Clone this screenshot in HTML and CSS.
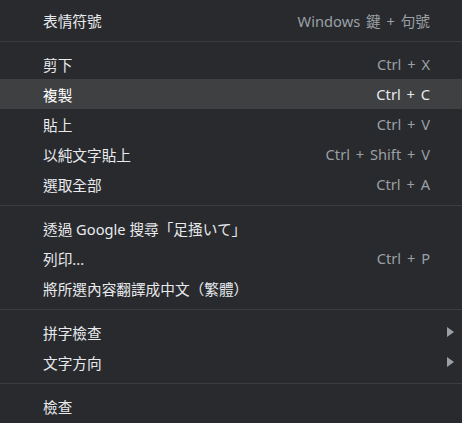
FILE: index.html
```html
<!DOCTYPE html>
<html lang="zh-Hant">
<head>
<meta charset="utf-8">
<link rel="stylesheet" href="styles.css">
</head>
<body>
<div class="menu">
  <div class="item"><span class="label">表情符號</span><span class="key">Windows 鍵 + 句號</span></div>
  <div class="sep"></div>
  <div class="item"><span class="label">剪下</span><span class="key">Ctrl + X</span></div>
  <div class="item active"><span class="label">複製</span><span class="key">Ctrl + C</span></div>
  <div class="item"><span class="label">貼上</span><span class="key">Ctrl + V</span></div>
  <div class="item"><span class="label">以純文字貼上</span><span class="key">Ctrl + Shift + V</span></div>
  <div class="item"><span class="label">選取全部</span><span class="key">Ctrl + A</span></div>
  <div class="sep"></div>
  <div class="item"><span class="label">透過 Google 搜尋「足掻いて」</span></div>
  <div class="item"><span class="label">列印...</span><span class="key">Ctrl + P</span></div>
  <div class="item"><span class="label">將所選內容翻譯成中文（繁體）</span></div>
  <div class="sep"></div>
  <div class="item sub"><span class="label">拼字檢查</span><svg class="arrow" width="7" height="10" viewBox="0 0 7 10"><path d="M0 0L7 5L0 10Z" fill="#9aa0a6"/></svg></div>
  <div class="item sub"><span class="label">文字方向</span><svg class="arrow" width="7" height="10" viewBox="0 0 7 10"><path d="M0 0L7 5L0 10Z" fill="#9aa0a6"/></svg></div>
  <div class="sep"></div>
  <div class="item"><span class="label">檢查</span></div>
</div>
</body>
</html>
```

FILE: styles.css
```css
html, body {
  margin: 0;
  padding: 0;
  background: #292a2d;
}
.menu {
  padding-top: 5px;
  font-family: "Noto Sans", "Noto Sans CJK TC", sans-serif;
  font-size: 14.667px;
  color: #e8eaed;
}
.item {
  display: flex;
  align-items: center;
  justify-content: space-between;
  height: 30px;
  padding: 0 32px 0 43px;
}
.item.active {
  background: #3f4042;
  color: #ffffff;
}
.item.sub {
  padding-right: 8px;
}
.key {
  color: #9aa0a6;
  word-spacing: 2px;
}
.item.active .key {
  color: #e8eaed;
}
.arrow {
  display: block;
}
.sep {
  height: 1px;
  background: #3c3d40;
  margin: 6px 0 7px;
}
```
